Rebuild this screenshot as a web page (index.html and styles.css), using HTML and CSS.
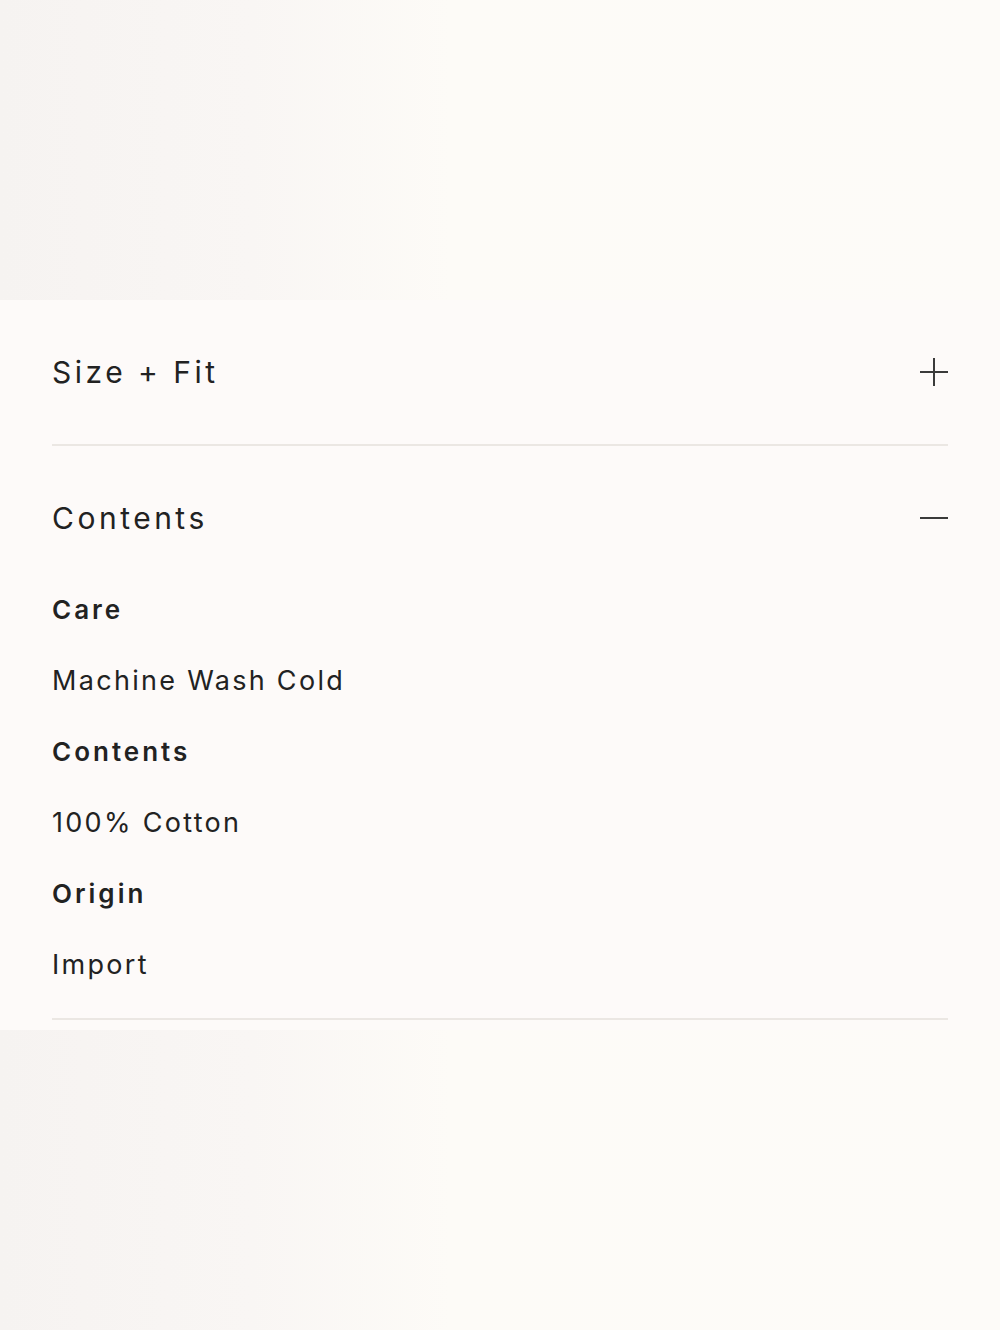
FILE: index.html
```
<!DOCTYPE html>
<html>
<head>
    <meta charset="UTF-8">
    <title>Product details</title>
    <link rel="stylesheet" href="styles.css">
</head>
<body>
    <div class="backdrop top"></div>
    <div class="panel">
        <div class="acc-item">
            <div class="acc-head">
                <span class="acc-title">Size + Fit</span>
                <svg class="acc-icon" width="30" height="30" viewBox="0 0 30 30">
                    <path d="M1 15H29M15 1V29" stroke="#3a3a3a" stroke-width="2" fill="none"/>
                </svg>
            </div>
        </div>
        <div class="acc-item">
            <div class="acc-head">
                <span class="acc-title">Contents</span>
                <svg class="acc-icon" width="30" height="30" viewBox="0 0 30 30">
                    <path d="M1 15H29" stroke="#3a3a3a" stroke-width="2" fill="none"/>
                </svg>
            </div>
            <dl class="acc-body">
                <dt>Care</dt>
                <dd>Machine Wash Cold</dd>
                <dt>Contents</dt>
                <dd>100% Cotton</dd>
                <dt>Origin</dt>
                <dd>Import</dd>
            </dl>
        </div>
    </div>
    <div class="backdrop bottom"></div>
</body>
</html>
```
FILE: styles.css
```
body{
    margin: 0;
    background-color: #fdfaf8;
    font-family: Inter, "Liberation Sans", sans-serif;
    color: #222;
}
.backdrop{
    height: 300px;
    background: linear-gradient(90deg, #f6f3f1 0%, #f9f6f4 25%, #fdfbf7 45%, #fdfbf8 100%);
}
.panel{
    padding: 0 52px 10px;
    background-color: #fdfaf9;
}
.acc-item{
    border-bottom: 2px solid #ebe7e3;
}
.acc-head{
    height: 144px;
    display: flex;
    align-items: center;
    justify-content: space-between;
}
.acc-title{
    font-size: 30px;
    font-weight: 400;
    letter-spacing: 3.5px;
}
.acc-icon{
    margin-right: -1px;
}
.acc-body{
    margin: 0;
    padding-bottom: 33px;
}
.acc-body dt,
.acc-body dd{
    margin: 0 0 31px;
    line-height: 40px;
}
.acc-body dd:last-child{
    margin-bottom: 0;
}
.acc-body dt{
    font-size: 26px;
    font-weight: 600;
    letter-spacing: 3px;
}
.acc-body dd{
    font-size: 27px;
    letter-spacing: 2.3px;
}
```
